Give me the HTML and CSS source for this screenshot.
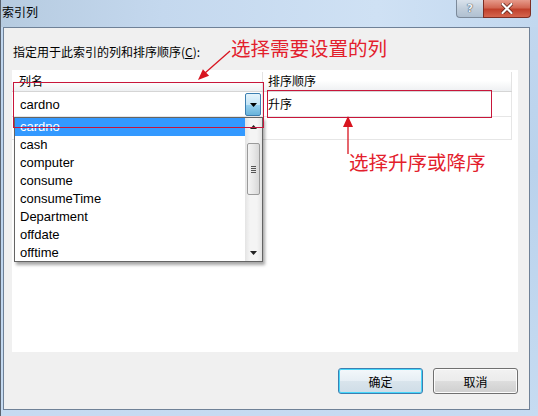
FILE: index.html
```html
<!DOCTYPE html>
<html>
<head>
<meta charset="utf-8">
<link rel="stylesheet" href="styles.css">
</head>
<body>
<div class="window">
  <div class="titlebar">
    <span class="title">索引列</span>
    <div class="caption-btns">
      <div class="cbtn help">?</div>
      <div class="cbtn close">
        <svg width="12" height="11" viewBox="0 0 12 11"><path d="M1.5 1 L10.5 10 M10.5 1 L1.5 10" stroke="#5a1d14" stroke-width="3.6" stroke-linecap="round"/><path d="M1.5 1 L10.5 10 M10.5 1 L1.5 10" stroke="#fff" stroke-width="2.2" stroke-linecap="round"/></svg>
      </div>
    </div>
  </div>
  <div class="frame">
    <div class="client">
      <div class="label">指定用于此索引的列和排序顺序(<u>C</u>):</div>
      <div class="grid">
        <div class="row head">
          <div class="cell c1">列名</div>
          <div class="cell c2">排序顺序</div>
        </div>
        <div class="row r1">
          <div class="cell c1">
            <div class="combo">
              <span class="combo-text">cardno</span>
              <div class="drop"><svg width="7" height="4" viewBox="0 0 7 4"><path d="M0 0 H7 L3.5 4 Z" fill="#000"/></svg></div>
            </div>
          </div>
          <div class="cell c2 asc">升序</div>
        </div>
        <div class="row r2">
          <div class="cell c1"></div>
          <div class="cell c2"></div>
        </div>
      </div>
      <div class="buttons">
        <button class="btn default">确定</button>
        <button class="btn">取消</button>
      </div>
    </div>
  </div>

  <div class="listbox">
    <div class="items">
      <div class="item sel">cardno</div>
      <div class="item">cash</div>
      <div class="item">computer</div>
      <div class="item">consume</div>
      <div class="item">consumeTime</div>
      <div class="item">Department</div>
      <div class="item">offdate</div>
      <div class="item">offtime</div>
    </div>
    <div class="vscroll">
      <div class="sb-up"><svg width="7" height="4" viewBox="0 0 7 4"><path d="M0 4 H7 L3.5 0 Z" fill="#222"/></svg></div>
      <div class="thumb"><div class="grip"></div></div>
      <div class="sb-down"><svg width="7" height="4" viewBox="0 0 7 4"><path d="M0 0 H7 L3.5 4 Z" fill="#222"/></svg></div>
    </div>
  </div>

  <div class="mark mark1"></div>
  <div class="mark mark2"></div>
  <svg class="arrows" width="538" height="416" viewBox="0 0 538 416">
    <line x1="229" y1="51" x2="204" y2="73" stroke="#d8141f" stroke-width="1.3"/>
    <polygon points="197,80 208.1,75.8 201.9,69.2" fill="#d8141f"/>
    <line x1="347" y1="154" x2="347" y2="126" stroke="#d8141f" stroke-width="1.3"/>
    <polygon points="347,116 342,127 352,127" fill="#d8141f"/>
  </svg>
  <div class="note note1">选择需要设置的列</div>
  <div class="note note2">选择升序或降序</div>
</div>
</body>
</html>
```

FILE: styles.css
```css
html, body {
  margin: 0;
  padding: 0;
}
body {
  width: 538px;
  height: 416px;
  overflow: hidden;
  font-family: "Liberation Sans", "Noto Sans CJK SC", sans-serif;
}
.window {
  position: relative;
  width: 538px;
  height: 416px;
  display: flex;
  flex-direction: column;
  background: linear-gradient(to bottom, #c3d8ef 0%, #bad2ec 40%, #c6dbf1 100%);
  box-sizing: border-box;
  border-left: 1px solid #5b6470;
}
.titlebar {
  height: 27px;
  display: flex;
  align-items: flex-start;
  background: linear-gradient(to right, #b6cbe0 0%, #c4d8ee 30%, #cfe1f4 70%, #c2d8ef 100%);
}
.title {
  font-family: "Noto Sans CJK SC", sans-serif;
  font-size: 12px;
  line-height: 16px;
  margin: 4px 0 0 1px;
  color: #000;
}
.caption-btns {
  margin-left: auto;
  margin-right: 7px;
  display: flex;
}
.cbtn {
  height: 18px;
  box-sizing: border-box;
  display: flex;
  align-items: center;
  justify-content: center;
}
.help {
  width: 27px;
  border: 1px solid #7c8a9a;
  border-top: none;
  border-right: none;
  border-bottom-left-radius: 4px;
  background: linear-gradient(to bottom, #d9e2ec 0%, #c1cedb 50%, #b0c0d1 100%);
  font-family: "DejaVu Sans", sans-serif;
  font-weight: bold;
  font-size: 11px;
  color: #eef2f6;
  text-shadow: 0 0 1px #33404e, 0 0 1px #33404e;
}
.close {
  width: 48px;
  border: 1px solid #7d2e24;
  border-top: none;
  border-bottom-right-radius: 4px;
  background: linear-gradient(to bottom, #e69a8b 0%, #d26753 45%, #c0402b 55%, #d5654e 100%);
}
.frame {
  flex: 1;
  display: flex;
  padding: 0 8px 6px 2px;
}
.client {
  flex: 1;
  background: #f0f0f0;
  border: 1px solid #6f8197;
  display: flex;
  flex-direction: column;
  padding: 16px 11px 0 8px;
}
.label {
  font-family: "Noto Sans CJK SC", sans-serif;
  font-size: 12px;
  line-height: 16px;
  height: 16px;
  padding-left: 1px;
  color: #000;
}
.grid {
  margin-top: 10px;
  height: 282px;
  background: #fff;
  padding-top: 2px;
  box-sizing: border-box;
}
.row {
  display: flex;
  width: 500px;
  box-sizing: border-box;
  border-bottom: 1px solid #e6e6e6;
}
.cell {
  box-sizing: border-box;
  border-right: 1px solid #e6e6e6;
  font-family: "Noto Sans CJK SC", sans-serif;
  font-size: 12px;
  color: #000;
}
.c1 { width: 251px; }
.c2 { width: 249px; }
.head {
  height: 20px;
  border-bottom: 1px solid #d5d5d5;
  background: linear-gradient(to bottom, #ffffff 0%, #ffffff 45%, #eef0f2 100%);
}
.head .cell {
  line-height: 18px;
  border-right-color: #e3e3e3;
}
.head .c1 { padding-left: 7px; }
.head .c2 { padding-left: 5px; }
.r1 { height: 25px; }
.r1 .c1 { padding: 1px 1px 0 2px; }
.r2 { height: 23px; }
.asc {
  padding-left: 5px;
  line-height: 24px;
}
.combo {
  height: 23px;
  display: flex;
  align-items: center;
  background: #fff;
}
.combo-text {
  flex: 1;
  padding-left: 6px;
  font-family: "Liberation Sans", sans-serif;
  font-size: 13px;
}
.drop {
  width: 16px;
  height: 23px;
  box-sizing: border-box;
  border: 1px solid #3c7fb1;
  border-radius: 2px;
  background: linear-gradient(to bottom, #e5f4fc 0%, #c4e5f6 50%, #98d1ef 51%, #68b3db 100%);
  display: flex;
  align-items: center;
  justify-content: center;
}
.buttons {
  margin-top: 16px;
  display: flex;
  justify-content: flex-end;
  gap: 10px;
}
.btn {
  width: 85px;
  height: 26px;
  padding: 0;
  box-sizing: border-box;
  border: 1px solid #707070;
  border-radius: 3px;
  background: linear-gradient(to bottom, #f2f2f2 0%, #ebebeb 50%, #dddddd 51%, #cfcfcf 100%);
  font-family: "Noto Sans CJK SC", sans-serif;
  font-size: 12px;
  color: #000;
  box-shadow: inset 0 0 0 1px #fcfcfc;
}
.btn.default {
  border-color: #3c7fb1;
  box-shadow: inset 0 0 0 1px #48d8fb;
  background: linear-gradient(to bottom, #eaf6fd 0%, #d9f0fc 50%, #bee6fd 51%, #a7d9f5 100%);
  background: linear-gradient(to bottom, #f3f8fb 0%, #e6eef4 50%, #d9e4ec 51%, #cfdde7 100%);
}

/* dropdown list overlay */
.listbox {
  position: absolute;
  left: 13px;
  top: 117px;
  width: 249px;
  height: 145px;
  box-sizing: border-box;
  border: 1px solid #646464;
  background: #fff;
  box-shadow: 2px 3px 3px rgba(0, 0, 0, 0.35);
  display: flex;
}
.items {
  flex: 1;
}
.item {
  height: 18px;
  line-height: 18px;
  padding-left: 5px;
  font-family: "Liberation Sans", sans-serif;
  font-size: 13px;
  color: #000;
}
.item.sel {
  background: #3399ff;
  color: #fff;
}
.vscroll {
  width: 17px;
  position: relative;
  background: linear-gradient(to right, #e4e4e4 0%, #f4f4f4 30%, #f4f4f4 70%, #e4e4e4 100%);
}
.sb-up, .sb-down {
  position: absolute;
  left: 0;
  width: 17px;
  height: 17px;
  display: flex;
  align-items: center;
  justify-content: center;
}
.sb-up { top: 0; }
.sb-down { bottom: 0; }
.thumb {
  position: absolute;
  left: 2px;
  top: 25px;
  width: 13px;
  height: 52px;
  box-sizing: border-box;
  border: 1px solid #9a9a9a;
  border-radius: 2px;
  background: linear-gradient(to right, #f4f4f4 0%, #e8e8e8 50%, #d8d8d8 100%);
  display: flex;
  align-items: center;
  justify-content: center;
}
.grip {
  width: 5px;
  height: 7px;
  background: repeating-linear-gradient(to bottom, #555 0px, #555 1px, transparent 1px, transparent 2px);
}

/* annotations */
.mark {
  position: absolute;
  border: 1px solid #c8163a;
  box-sizing: border-box;
}
.mark1 {
  left: 12px;
  top: 82px;
  width: 251px;
  height: 46px;
}
.mark2 {
  left: 266px;
  top: 90px;
  width: 225px;
  height: 28px;
}
.arrows {
  position: absolute;
  left: 0;
  top: 0;
}
.note {
  position: absolute;
  font-family: "Noto Sans CJK SC", sans-serif;
  font-size: 19.5px;
  line-height: 20px;
  color: #e3202c;
  white-space: nowrap;
}
.note1 {
  left: 230px;
  top: 38px;
}
.note2 {
  left: 348px;
  top: 152px;
}
```
